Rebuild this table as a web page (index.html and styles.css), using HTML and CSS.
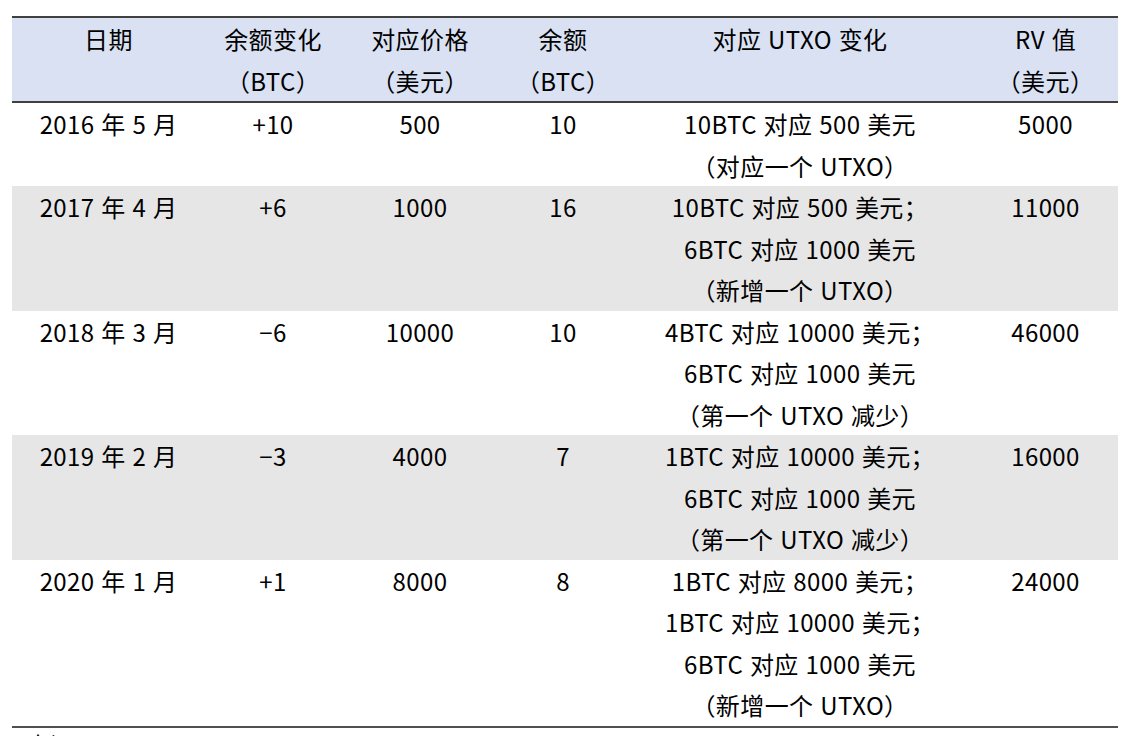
FILE: index.html
```html
<!DOCTYPE html>
<html lang="zh-CN">
<head>
<meta charset="utf-8">
<link rel="stylesheet" href="styles.css">
</head>
<body>
<div class="page">
<table class="data">
  <colgroup>
    <col class="c1"><col class="c2"><col class="c3"><col class="c4"><col class="c5"><col class="c6">
  </colgroup>
  <thead>
    <tr>
      <th>日期</th>
      <th>余额变化<br>（BTC）</th>
      <th>对应价格<br>（美元）</th>
      <th>余额<br>（BTC）</th>
      <th>对应 UTXO 变化</th>
      <th>RV 值<br>（美元）</th>
    </tr>
  </thead>
  <tbody>
    <tr>
      <td>2016 年 5 月</td><td>+10</td><td>500</td><td>10</td>
      <td>10BTC 对应 500 美元<br>（对应一个 UTXO）</td><td>5000</td>
    </tr>
    <tr class="alt">
      <td>2017 年 4 月</td><td>+6</td><td>1000</td><td>16</td>
      <td>10BTC 对应 500 美元；<br>6BTC 对应 1000 美元<br>（新增一个 UTXO）</td><td>11000</td>
    </tr>
    <tr>
      <td>2018 年 3 月</td><td>−6</td><td>10000</td><td>10</td>
      <td>4BTC 对应 10000 美元；<br>6BTC 对应 1000 美元<br>（第一个 UTXO 减少）</td><td>46000</td>
    </tr>
    <tr class="alt">
      <td>2019 年 2 月</td><td>−3</td><td>4000</td><td>7</td>
      <td>1BTC 对应 10000 美元；<br>6BTC 对应 1000 美元<br>（第一个 UTXO 减少）</td><td>16000</td>
    </tr>
    <tr>
      <td>2020 年 1 月</td><td>+1</td><td>8000</td><td>8</td>
      <td>1BTC 对应 8000 美元；<br>1BTC 对应 10000 美元；<br>6BTC 对应 1000 美元<br>（新增一个 UTXO）</td><td>24000</td>
    </tr>
  </tbody>
</table>
<div class="source">来源：</div>
</div>
</body>
</html>
```
FILE: styles.css
```css
html, body {
  margin: 0;
  padding: 0;
  background: #ffffff;
}
.page {
  padding: 16px 13px 0 12px;
  font-family: "Noto Sans CJK SC", "Noto Sans", sans-serif;
  font-size: 24px;
  color: #000000;
}
.data {
  width: 1106px;
  border-collapse: collapse;
  table-layout: fixed;
  border-top: 2px solid #404040;
  border-bottom: 2px solid #505050;
}
.c1 { width: 193px; }
.c2 { width: 136px; }
.c3 { width: 158px; }
.c4 { width: 128px; }
.c5 { width: 346px; }
.c6 { width: 145px; }
.data th,
.data td {
  padding: 0;
  text-align: center;
  vertical-align: top;
  line-height: 41.5px;
  font-weight: normal;
  letter-spacing: 0.4px;
  word-spacing: 1px;
}
.data thead tr {
  background: #d9e1f2;
  border-bottom: 2px solid #404040;
}
.data tbody tr.alt {
  background: #e7e6e6;
}
.source {
  margin-top: 2px;
  padding-left: 14px;
  line-height: 30px;
}
```
